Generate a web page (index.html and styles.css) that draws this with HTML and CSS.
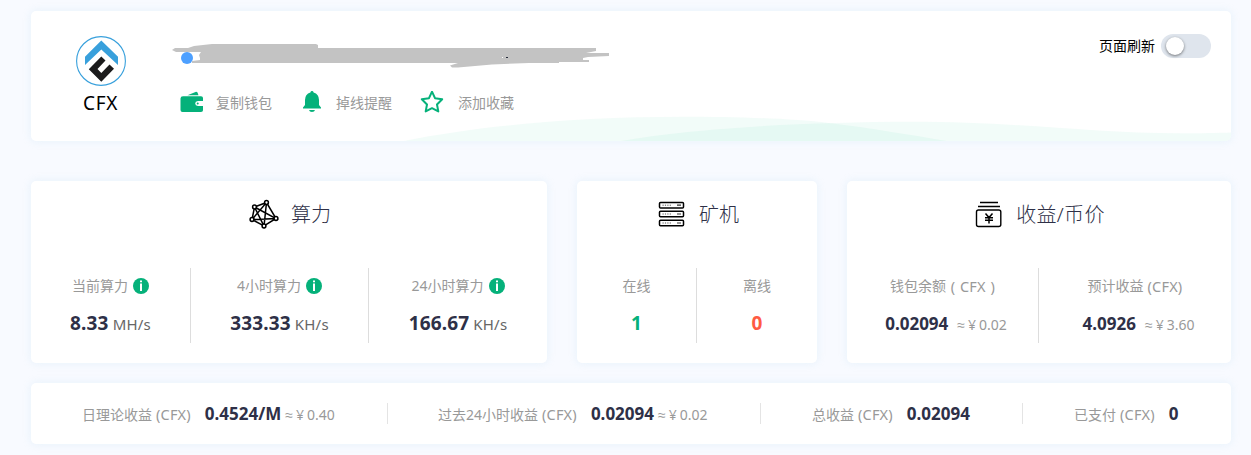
FILE: index.html
```html
<!DOCTYPE html>
<html lang="zh-CN">
<head>
<meta charset="utf-8">
<title>CFX</title>
<link rel="stylesheet" href="styles.css">
</head>
<body>
<main class="page">
  <section class="card account">
    <svg class="waves" viewBox="0 0 1200 130">
      <path d="M373 130C440 116 540 105.700 650 105.700C710 105.700 760 107.500 798 112C840 117 880 124 916 130Z"/>
      <path d="M590 130C650 119 760 110.700 881 110.700C990 110.700 1060 122.300 1150 122.300C1170 122.300 1185 122 1200 121.500V130Z"/>
    </svg>
    <div class="coin">
      <svg class="coin-logo" viewBox="0 0 50 50">
        <circle cx="25" cy="25" r="24.400" fill="#fff" stroke="#38a0dc" stroke-width="1.100"/>
        <path d="M25.300 4.500L42 20.800V29L25.300 13.500L9 29V20.800Z" fill="#38a0dc"/>
        <path d="M25.300 20.500L29.500 24.500L21.500 33L25.300 37L33.500 28.500L38 32.800L25.300 45.800L12.800 33.200Z" fill="#1b1b1c"/>
      </svg>
      <div class="coin-name">CFX</div>
    </div>
    <div class="account-main">
      <svg class="address" viewBox="0 0 440 28">
        <path fill="#c3c3c3" d="M0 10L3 8H16L22 6L40 4H144L146 5V8H424V11L414 13H437V16L416 17L411 18V20H417V22H387V23H357L320 24.500L286 27.500H280L278 25.500L286 23H20V21L28 20V18L27 15L29 12H4Z"/>
        <path fill="#fff" d="M330 17H331V18H330Z"/>
        <circle cx="15" cy="18" r="6" fill="#4da0ff"/>
        <path fill="#222838" d="M334 17H336V18H334Z"/>
      </svg>
      <div class="actions">
        <div class="action">
          <svg class="action-icon" viewBox="0 0 24 24">
            <path d="M7.500 4.300L15.500 .9Q17 .6 17.600 1.800L18.500 4.300Z"/>
            <path d="M3 5.200H21Q23 5.200 23 7V10H18Q15.200 10.400 15.200 12.500T18 15H23V19.200Q23 21 21 21H2.500Q.5 21 .5 19V7.500Q.5 5.200 3 5.200Z"/>
            <circle cx="17.700" cy="12.500" r="1"/>
          </svg><span>复制钱包</span>
        </div>
        <div class="action">
          <svg class="action-icon" viewBox="0 0 24 24">
            <path d="M12 0Q13.300 0 13.600 1.400Q19 3 19 9V14L21 16.500V17.500H3V16.500L5 14V9Q5 3 10.400 1.400Q10.700 0 12 0ZM9 19H15Q14.500 21 12 21T9 19Z"/>
          </svg><span>掉线提醒</span>
        </div>
        <div class="action">
          <svg class="action-icon" viewBox="0 0 24 24">
            <path d="M12 .7L15 7.200L22.200 8.200L17 13.500L18.300 20.400L12 17.200L5.700 20.400L7 13.500L1.800 8.200L9 7.200Z" fill="none" stroke="#05b17a" stroke-width="2" stroke-linejoin="round"/>
          </svg><span>添加收藏</span>
        </div>
      </div>
    </div>
    <div class="refresh"><span>页面刷新</span><span class="switch"><span class="knob"></span></span></div>
  </section>

  <div class="cards">
    <section class="card">
      <h2 class="title title-hash">
        <svg class="title-icon" viewBox="0 0 30 30" fill="none" stroke="#000" stroke-width="1.500">
          <path d="M5.500 8L17.500 3.500L27 19.500L15 27L3 20.500ZM5.500 8L27 19.500L3 20.500L17.500 3.500L15 27Z"/>
          <g fill="#fff"><circle cx="5.500" cy="8" r="1.900"/><circle cx="17.500" cy="3.500" r="1.900"/><circle cx="27" cy="19.500" r="1.900"/><circle cx="15" cy="27" r="1.900"/><circle cx="3" cy="20.500" r="1.900"/></g>
        </svg><span>算力</span>
      </h2>
      <div class="stats stats-hash">
        <div class="stat"><div class="label">当前算力<svg class="info" viewBox="0 0 16 16"><circle cx="8" cy="8" r="8"/><path d="M7 2.500H9V4.300H7ZM7 5.500H9V13H7Z"/></svg></div><div class="value"><b>8.33</b><span class="unit">MH/s</span></div></div>
        <div class="stat"><div class="label">4小时算力<svg class="info" viewBox="0 0 16 16"><circle cx="8" cy="8" r="8"/><path d="M7 2.500H9V4.300H7ZM7 5.500H9V13H7Z"/></svg></div><div class="value"><b>333.33</b><span class="unit">KH/s</span></div></div>
        <div class="stat"><div class="label">24小时算力<svg class="info" viewBox="0 0 16 16"><circle cx="8" cy="8" r="8"/><path d="M7 2.500H9V4.300H7ZM7 5.500H9V13H7Z"/></svg></div><div class="value"><b>166.67</b><span class="unit">KH/s</span></div></div>
      </div>
    </section>
    <section class="card">
      <h2 class="title title-miner">
        <svg class="title-icon" viewBox="0 0 30 30">
          <g fill="#fff" stroke="#000" stroke-width="1.500"><rect x="2.500" y="3.500" width="24" height="5.500" rx="1"/><rect x="2.500" y="12.300" width="24" height="5.500" rx="1"/><rect x="2.500" y="21.200" width="24" height="5.500" rx="1"/></g>
          <path d="M5.500 6.200H14M5.500 15H14M5.500 24H14" stroke="#555" stroke-dasharray="1.200 1.200"/>
          <path d="M20 6.200H24M20 15H24M20 24H24" stroke="#333" stroke-width="1.200"/>
        </svg><span>矿机</span>
      </h2>
      <div class="stats">
        <div class="stat"><div class="label">在线</div><div class="value online"><b>1</b></div></div>
        <div class="stat"><div class="label">离线</div><div class="value offline"><b>0</b></div></div>
      </div>
    </section>
    <section class="card">
      <h2 class="title title-income">
        <svg class="title-icon" viewBox="0 0 30 30" fill="none" stroke="#000" stroke-width="1.400">
          <path d="M6 2.500H24M4 6.500H26"/><rect x="2.500" y="10" width="24.300" height="16.500" rx="2"/>
          <path d="M11.500 13.500L15 17.500L18.500 13.500M11 17.700H19M11 20.300H19M15 17.500V23.500" stroke-width="1.500"/>
        </svg><span>收益/币价</span>
      </h2>
      <div class="stats">
        <div class="stat"><div class="label">钱包余额<span class="ticker wide"> ( CFX )</span></div><div class="value income"><b>0.02094</b><span class="approx"><span class="sign">≈</span><span class="yen">¥</span>0.02</span></div></div>
        <div class="stat"><div class="label">预计收益<span class="ticker"> (CFX)</span></div><div class="value income"><b>4.0926</b><span class="approx"><span class="sign">≈</span><span class="yen">¥</span>3.60</span></div></div>
      </div>
    </section>
  </div>

  <section class="card totals">
    <div class="total"><span class="name">日理论收益<span class="ticker"> (CFX)</span></span><b>0.4524/M</b><span class="approx"><span class="sign">≈</span><span class="yen">¥</span>0.40</span></div>
    <div class="total"><span class="name">过去24小时收益<span class="ticker"> (CFX)</span></span><b>0.02094</b><span class="approx"><span class="sign">≈</span><span class="yen">¥</span>0.02</span></div>
    <div class="total"><span class="name">总收益<span class="ticker"> (CFX)</span></span><b>0.02094</b></div>
    <div class="total"><span class="name">已支付<span class="ticker"> (CFX)</span></span><b>0</b></div>
  </section>
</main>
</body>
</html>
```
FILE: styles.css
```css
* { box-sizing: border-box; }
body {
  margin: 0;
  background: #f8faff;
  color: #999;
  font: 14px/20px "Noto Sans", "Noto Sans CJK SC", sans-serif;
  white-space: nowrap;
}
.page { width: 1251px; height: 455px; padding: 11px 20px 0 31px; overflow: hidden; }
.card { background: #fff; border-radius: 5px; box-shadow: 0 0 8px rgba(205, 232, 242, .42); }
.account { position: relative; display: flex; height: 130px; }
.waves { position: absolute; inset: 0; width: 1200px; height: 130px; border-radius: 5px; fill: rgba(0, 190, 130, .05); }
.coin { width: 141px; padding: 25px 2px 0 0; display: flex; flex-direction: column; align-items: center; }
.coin-logo { width: 50px; height: 50px; }
.coin-name { margin-top: 5px; color: #000; font-size: 19px; line-height: 24px; letter-spacing: .6px; }
.account-main { position: relative; flex: 1; padding-top: 29px; }
.address { display: block; width: 440px; height: 28px; }
.actions { display: flex; gap: 28px; padding: 23px 0 0 8px; }
.action { display: flex; align-items: center; gap: 12px; height: 24px; }
.action:last-child { gap: 14px; }
.action-icon { width: 24px; height: 24px; fill: #05b17a; }
.refresh { position: relative; display: flex; height: 24px; margin: 23px 20px 0 0; gap: 6px; align-items: center; color: #000; }
.switch { width: 50px; height: 24px; padding: 3px 5px; border-radius: 12px; background: #dfe5ed; }
.knob { display: block; width: 18px; height: 18px; border-radius: 50%; background: #fff; box-shadow: 0 1px 3px rgba(0, 0, 0, .5); }
.cards { display: grid; grid-template-columns: 516px 240px 384px; gap: 30px; margin-top: 40px; }
.cards .card { height: 182px; }
.title { display: flex; justify-content: center; align-items: center; gap: 12px; height: 30px; margin: 19px 0 0; color: #2e3047; font-size: 20px; font-weight: 300; }
.title-icon { width: 30px; height: 30px; }
.title-hash { padding-left: 2px; }
.title-hash .title-icon, .title-miner .title-icon { margin-top: -2px; }
.title-miner { padding-left: 2px; }
.title-income { padding-left: 1px; }
.title-income span { letter-spacing: .3px; }
.stats { display: grid; grid-template-columns: 1fr 1fr; margin-top: 38px; }
.stats-hash { grid-template-columns: 160px 178px 178px; }
.stat { height: 75px; padding-top: 8px; border-right: 1px solid #ddd; }
.stat:last-child { border-right: 0; }
.label { display: flex; justify-content: center; align-items: center; height: 20px; white-space: pre; }
.ticker { font-size: 14.5px; letter-spacing: .2px; line-height: 20px; }
.ticker.wide { word-spacing: .8px; }
.info { width: 16px; height: 16px; margin-left: 5px; fill: #05b17a; }
.info path { fill: #fff; }
.value { display: flex; justify-content: center; align-items: baseline; gap: 4px; margin-top: 13px; line-height: 28px; }
.value b { color: #2e3047; font-size: 19px; letter-spacing: .15px; }
.value.online b { color: #05b17a; }
.value.offline b { color: #ff5b43; }
.unit { color: #666; font-size: 15px; letter-spacing: .2px; }
.value.income { gap: 9px; padding-left: 7px; margin-top: 14px; }
.value.income b, .total b { font-size: 17px; color: #2e3047; letter-spacing: 0; }
.sign { font-family: "Liberation Sans", sans-serif; margin-right: 3px; }
.yen { margin-right: 3px; }
.totals { display: grid; grid-template-columns: 357px 373px 262px 208px; height: 61px; margin-top: 20px; align-items: center; }
.total { display: flex; align-items: center; height: 21px; padding-left: 51px; border-right: 1px solid #e4e4e4; }
.total:nth-child(2) { padding-left: 50px; }
.total:last-child { border-right: 0; }
.name { position: relative; top: 1px; white-space: pre; }
.total .approx { position: relative; top: 1px; }
.total b { margin: 0 4px 0 14px; }
```
